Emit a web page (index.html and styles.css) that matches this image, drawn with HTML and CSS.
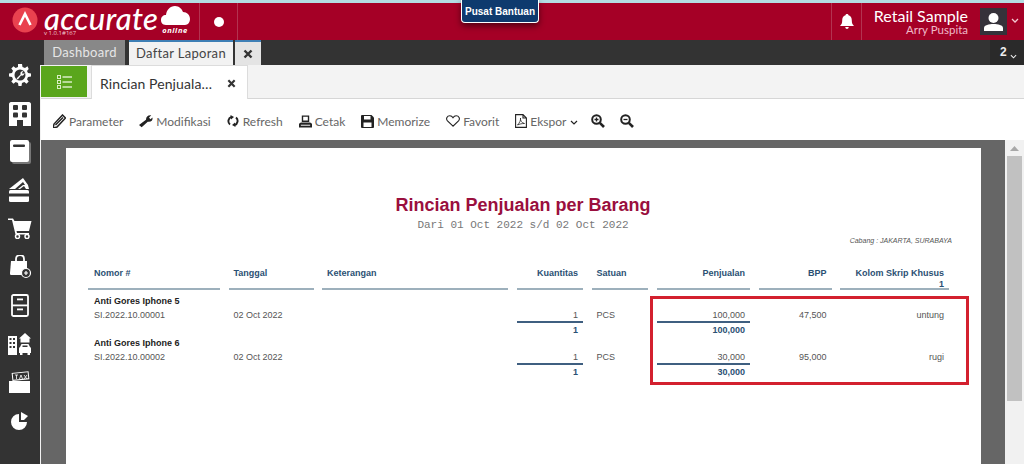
FILE: index.html
```html
<!DOCTYPE html>
<html lang="id">
<head>
<meta charset="utf-8">
<title>Rincian Penjualan per Barang</title>
<link rel="stylesheet" href="styles.css">
</head>
<body>
<div class="app">
  <div class="strip"></div>
  <header class="topbar">
    <div class="logo">
      <svg class="logo-mark" width="26" height="26" viewBox="0 0 26 26"><circle cx="13" cy="13" r="12.500" fill="#e9414f"/><path d="M7.500 18 L13 7 L18.500 18" fill="none" stroke="#fff" stroke-width="2.600"/></svg>
      <div class="logo-words">
        <span class="logo-name">accurate</span>
        <span class="logo-ver">v 1.0.1#167</span>
      </div>
      <div class="logo-cloud">
        <svg width="29" height="19" viewBox="0 0 29 19"><path d="M5 19 C1 19 0 16 0 14 C0 11 2 9 5 9 C5.500 4 9 0 14 0 C18 0 21 3 22 6 C26 6 29 9 29 13 C29 16 27 19 24 19 Z" fill="#fff"/></svg>
        <span class="logo-online">online</span>
      </div>
    </div>
    <div class="top-slot"><span class="dot"></span></div>
    <div class="top-right">
      <div class="bell-slot">
        <svg width="14" height="15" viewBox="0 0 14 15"><path d="M7 0 C8 0 8.500 .6 8.500 1.300 C11 2 11.800 4 11.800 6.500 C11.800 9 12.500 10.500 14 12 L0 12 C1.500 10.500 2.200 9 2.200 6.500 C2.200 4 3 2 5.500 1.300 C5.500 .6 6 0 7 0 Z M5.200 13 L8.800 13 C8.600 14.300 7.900 15 7 15 C6.100 15 5.400 14.300 5.200 13 Z" fill="#fff"/></svg>
      </div>
      <div class="who">
        <span class="who-co">Retail Sample</span>
        <span class="who-user">Arry Puspita</span>
      </div>
      <div class="avatar">
        <svg width="19" height="18" viewBox="0 0 19 18"><ellipse cx="9.500" cy="5" rx="5" ry="5" fill="#fff"/><path d="M0 18 L0 15 C0 12 5 11 9.500 11 C14 11 19 12 19 15 L19 18 Z" fill="#fff"/></svg>
      </div>
      <svg class="chev" width="8" height="5" viewBox="0 0 8 5"><path d="M1 1 L4 4 L7 1" fill="none" stroke="#f3c9d2" stroke-width="1.300"/></svg>
    </div>
  </header>
  <a class="help">Pusat Bantuan</a>
  <div class="main">
    <nav class="side">
      <div class="side-item"><svg width="22" height="22" viewBox="0 0 22 22"><path d="M9 0 H13 L13.500 3 L16 4 L18.500 2.300 L19.700 5 L18 7 L19 9 L22 9.500 V12.500 L19 13 L18 15.300 L19.700 17.500 L17.500 19.700 L15.300 18 L13 19 L12.500 22 H9.500 L9 19 L6.700 18 L4.500 19.700 L2.300 17.500 L4 15.300 L3 13 L0 12.500 V9.500 L3 9 L4 6.700 L2.300 4.500 L4.500 2.300 L6.700 4 L9 3 Z" fill="#fff"/><circle cx="11" cy="11" r="5.500" fill="#333"/><path d="M7.500 14.500 L11.500 10.500 C11 8.500 12 7 14.500 7 L13 9 L14 10 L15.500 8.500 C15.500 11 14 12 12 11.500 L8.800 15.500 Z" fill="#fff"/></svg></div>
      <div class="side-item"><svg width="22" height="24" viewBox="0 0 22 24"><path d="M2 0 H20 C21 0 22 1 22 2 V24 H14 V18 H8 V24 H0 V2 C0 1 1 0 2 0 Z" fill="#fff"/><g fill="#333"><rect x="4" y="3" width="5" height="5" rx="1"/><rect x="13" y="3" width="5" height="5" rx="1"/><rect x="4" y="10.500" width="5" height="5" rx="1"/><rect x="13" y="10.500" width="5" height="5" rx="1"/></g></svg></div>
      <div class="side-item"><svg width="21" height="24" viewBox="0 0 21 24"><rect x="2" y="2" width="19" height="22" rx="2" fill="#777"/><rect x="0" y="0" width="19" height="22" rx="2" fill="#fff"/><rect x="3" y="4.500" width="12" height="2.500" rx="1" fill="#333"/></svg></div>
      <div class="side-item"><svg width="22" height="24" viewBox="0 0 22 24"><path d="M0 11 L14 0 L19 7 L20 11 Z" fill="#fff"/><path d="M6 11 L14 4 L16 7 L14 7 L9 11 Z M11 11 L15 8 L17 11 Z" fill="#333"/><rect x="0" y="12" width="20" height="12" rx="1.500" fill="#fff"/><rect x="0" y="15.500" width="20" height="3" fill="#333"/></svg></div>
      <div class="side-item"><svg width="24" height="21" viewBox="0 0 24 21"><path d="M0 0.500 H5 L6.500 3 H23.500 L21 13 H8.500 L9 15 H21 V16.500 H7.500 L4 2 H0 Z" fill="#fff"/><circle cx="9.500" cy="18.500" r="2" fill="none" stroke="#fff" stroke-width="1.500"/><circle cx="19" cy="18.500" r="2" fill="none" stroke="#fff" stroke-width="1.500"/></svg></div>
      <div class="side-item"><svg width="21" height="24" viewBox="0 0 21 24"><path d="M6 6 V4 C6 1 8 0 10 0 C12 0 14 1 14 4 V6" fill="none" stroke="#fff" stroke-width="1.800"/><path d="M1 6 H17 V20 H1 C0 20 0 19 0 18 Z" fill="#fff"/><circle cx="16" cy="18" r="4.500" fill="#333" stroke="#fff" stroke-width="1.200"/><path d="M14 18 H18 M16 16 V20" stroke="#fff" stroke-width="1.200"/></svg></div>
      <div class="side-item"><svg width="18" height="23" viewBox="0 0 18 23"><rect x="1" y="1" width="16" height="21" rx="1.500" fill="#333" stroke="#fff" stroke-width="1.800"/><rect x="1" y="10.500" width="16" height="1.800" fill="#fff"/><rect x="6" y="4.500" width="6" height="1.800" fill="#fff"/><rect x="6" y="14.500" width="6" height="1.800" fill="#fff"/></svg></div>
      <div class="side-item"><svg width="24" height="24" viewBox="0 0 24 24"><rect x="0" y="4" width="9" height="19" fill="#fff"/><g fill="#333"><rect x="1.500" y="6" width="2" height="2"/><rect x="5" y="6" width="2" height="2"/><rect x="1.500" y="10" width="2" height="2"/><rect x="5" y="10" width="2" height="2"/><rect x="1.500" y="14" width="2" height="2"/><rect x="5" y="14" width="2" height="2"/></g><path d="M11 6.500 L17 1 L23 6.500 H21.500 V10.500 H12.500 V6.500 Z" fill="#fff"/><path d="M12 15 L13.500 12 H20.500 L22 15 C23 15.500 23 16 23 17 V21 H11 V17 C11 16 11 15.500 12 15 Z" fill="#fff"/><rect x="14.500" y="13.500" width="5" height="1.500" fill="#333"/><rect x="12" y="21" width="2.500" height="2" fill="#fff"/><rect x="19.500" y="21" width="2.500" height="2" fill="#fff"/></svg></div>
      <div class="side-item"><svg width="22" height="22" viewBox="0 0 22 22"><rect x="0" y="10" width="21" height="12" fill="#fff"/><rect x="3.500" y="1.500" width="16" height="7" transform="rotate(-6 12 5)" fill="#333" stroke="#fff" stroke-width="1"/><path d="M6 4 H9 M7.500 4 V8 M10.500 8 L12 4 L13.500 8 M15 4 L18 8 M18 4 L15 8" fill="none" stroke="#fff" stroke-width=".8"/></svg></div>
      <div class="side-item"><svg width="19" height="18" viewBox="0 0 19 18"><path d="M8 2 A8 8 0 1 0 16 10 H8 Z" fill="#fff"/><path d="M10 0 L17 4 L13 8 L10 8 Z" fill="#fff"/></svg></div>
    </nav>
    <div class="content">
      <div class="tabs">
        <span class="tab tab-muted">Dashboard</span>
        <span class="tab tab-active">Daftar Laporan</span>
        <span class="tab tab-close"><svg width="10" height="10" viewBox="0 0 10 10"><path d="M1.500 1.500 L8.500 8.500 M8.500 1.500 L1.500 8.500" stroke="#333" stroke-width="2.400"/></svg></span>
        <span class="tab-count">2<svg width="7" height="5" viewBox="0 0 8 5"><path d="M1 1 L4 4 L7 1" fill="none" stroke="#eee" stroke-width="1.200"/></svg></span>
      </div>
      <div class="pane">
        <div class="subtabs">
          <span class="list-btn"><svg width="15" height="14" viewBox="0 0 15 14"><g fill="none" stroke="#d8edc4" stroke-width="1"><rect x=".5" y=".5" width="3" height="3"/><rect x=".5" y="5.500" width="3" height="3"/><rect x=".5" y="10.500" width="3" height="3"/></g><path d="M5.500 2 H15 M5.500 7 H15 M5.500 12 H15" stroke="#d8edc4" stroke-width="1.400"/></svg></span>
          <span class="subtab"><span class="subtab-label">Rincian Penjuala…</span><svg width="9" height="9" viewBox="0 0 10 10"><path d="M1.500 1.500 L8.500 8.500 M8.500 1.500 L1.500 8.500" stroke="#333" stroke-width="2.400"/></svg></span>
        </div>
        <div class="toolbar">
          <span class="tool"><svg width="13" height="14" viewBox="0 0 13 14"><path d="M0 14 L1 10 L9.500 1 L12.500 4 L4 13 Z" fill="none" stroke="#222" stroke-width="1.500"/><path d="M2 10.500 L9.500 3 L10.500 4 L3 11.500 Z" fill="#222"/></svg>Parameter</span>
          <span class="tool"><svg width="14" height="14" viewBox="0 0 16 14"><path d="M0 11.500 L8 5.500 C8 2 10.500 0 14 0.500 L11.500 3 L13 5 L15.500 3 C16 6.500 13.500 8.500 10 7.800 L3 14 Z" fill="#222"/></svg>Modifikasi</span>
          <span class="tool"><svg class="wide-gap" width="12" height="12" viewBox="0 0 12 12"><path d="M4.500 1.800 A4.500 4.500 0 0 0 3 9.500 M7.500 10.200 A4.500 4.500 0 0 0 9 2.500" fill="none" stroke="#222" stroke-width="1.900"/><path d="M3.500 0 L7 2 L4 4.500 Z M8.500 12 L5 10 L8 7.500 Z" fill="#222"/></svg>Refresh</span>
          <span class="tool"><svg width="13" height="13" viewBox="0 0 14 13"><path d="M3 0 H11 V7 H3 Z M4.500 1.500 V5.500 H9.500 V1.500 Z M0 9 L2 7.500 H12 L14 9 V13 H0 Z" fill="#222" fill-rule="evenodd"/><rect x="2" y="10" width="10" height="1" fill="#fff"/></svg>Cetak</span>
          <span class="tool"><svg width="13" height="13" viewBox="0 0 13 13"><path d="M0 1 Q0 0 1 0 H10.500 L13 2.500 V12 Q13 13 12 13 H1 Q0 13 0 12 Z" fill="#222"/><rect x="3" y="1" width="6.500" height="3.500" fill="#fff"/><rect x="2.500" y="7.500" width="8" height="4.500" fill="#fff"/></svg>Memorize</span>
          <span class="tool"><svg width="14" height="12" viewBox="0 0 14 12"><path d="M7 11.200 L1.500 5.800 C-.5 3.500 1.200 .7 3.800 .7 C5.200 .7 6.300 1.500 7 2.700 C7.700 1.500 8.800 .7 10.200 .7 C12.800 .7 14.500 3.500 12.500 5.800 Z" fill="none" stroke="#222" stroke-width="1.100"/></svg>Favorit</span>
          <span class="tool"><svg width="12" height="14" viewBox="0 0 12 14"><path d="M.6 .6 H8 L11.400 4 V13.400 H.6 Z M8 .6 V4 H11.400" fill="none" stroke="#222" stroke-width="1.100"/><path d="M2.500 11 C4.500 9 6 6 5.500 4 C5 6 6.500 9 9.500 9.500 C7 9.500 4.500 10 2.500 11 Z" fill="none" stroke="#222" stroke-width=".8"/></svg>Ekspor<svg class="caret" width="8" height="5" viewBox="0 0 8 5"><path d="M1 1 L4 4 L7 1" fill="none" stroke="#222" stroke-width="1.200"/></svg></span>
          <span class="tool zoom-in"><svg width="14" height="14" viewBox="0 0 14 14"><circle cx="5.500" cy="5.500" r="4.300" fill="none" stroke="#222" stroke-width="2"/><path d="M8.800 8.800 L13 13" stroke="#222" stroke-width="2.600"/><path d="M3.500 5.500 H7.500 M5.500 3.500 V7.500" stroke="#222" stroke-width="1.300"/></svg></span>
          <span class="tool zoom-out"><svg width="14" height="14" viewBox="0 0 14 14"><circle cx="5.500" cy="5.500" r="4.300" fill="none" stroke="#222" stroke-width="2"/><path d="M8.800 8.800 L13 13" stroke="#222" stroke-width="2.600"/><path d="M3.500 5.500 H7.500" stroke="#222" stroke-width="1.300"/></svg></span>
        </div>
        <div class="viewer">
          <div class="viewer-gray">
            <article class="page">
              <h1 class="report-title">Rincian Penjualan per Barang</h1>
              <p class="report-range">Dari 01 Oct 2022 s/d 02 Oct 2022</p>
              <p class="report-branch">Cabang : JAKARTA, SURABAYA</p>
              <div class="grid grid-head">
                <div class="th">Nomor #</div>
                <div class="th">Tanggal</div>
                <div class="th">Keterangan</div>
                <div class="th r">Kuantitas</div>
                <div class="th">Satuan</div>
                <div class="th r">Penjualan</div>
                <div class="th r">BPP</div>
                <div class="th r">Kolom Skrip Khusus<br>1</div>
              </div>
              <div class="group">
                <div class="item">Anti Gores Iphone 5</div>
                <div class="grid grid-row">
                  <div class="td">SI.2022.10.00001</div>
                  <div class="td">02 Oct 2022</div>
                  <div class="td"></div>
                  <div class="td r sum">1</div>
                  <div class="td">PCS</div>
                  <div class="td r sum">100,000</div>
                  <div class="td r">47,500</div>
                  <div class="td r">untung</div>
                </div>
                <div class="grid grid-total">
                  <div></div><div></div><div></div>
                  <div class="tot r">1</div>
                  <div></div>
                  <div class="tot r">100,000</div>
                  <div></div><div></div>
                </div>
              </div>
              <div class="group">
                <div class="item">Anti Gores Iphone 6</div>
                <div class="grid grid-row">
                  <div class="td">SI.2022.10.00002</div>
                  <div class="td">02 Oct 2022</div>
                  <div class="td"></div>
                  <div class="td r sum">1</div>
                  <div class="td">PCS</div>
                  <div class="td r sum">30,000</div>
                  <div class="td r">95,000</div>
                  <div class="td r">rugi</div>
                </div>
                <div class="grid grid-total">
                  <div></div><div></div><div></div>
                  <div class="tot r">1</div>
                  <div></div>
                  <div class="tot r">30,000</div>
                  <div></div><div></div>
                </div>
              </div>
              <div class="highlight"></div>
            </article>
          </div>
          <div class="scrollbar">
            <svg width="9" height="5" viewBox="0 0 9 5"><path d="M0 5 L4.500 0 L9 5 Z" fill="#a8a8a8"/></svg>
            <div class="thumb"></div>
          </div>
        </div>
      </div>
    </div>
  </div>
</div>
</body>
</html>
```
FILE: styles.css
```css
* { box-sizing: border-box; }
html, body { margin: 0; height: 100%; overflow: hidden; }
body { font-family: "Lato", "Open Sans", sans-serif; background: #333; }
.app { position: relative; width: 1024px; height: 464px; display: flex; flex-direction: column; overflow: hidden; }
.strip { height: 3px; background: #b4dde3; flex: none; }

.topbar { height: 37px; flex: none; background: #a50026; display: flex; align-items: stretch; color: #fff; }
.logo { width: 199px; display: flex; align-items: flex-start; padding: 4px 0 0 12px; flex: none; }
.logo-mark { flex: none; }
.logo-words { display: flex; flex-direction: column; margin-left: 6px; width: 116px; }
.logo-name { font-family: "Lato", sans-serif; font-style: italic; font-weight: 500; font-size: 31px; line-height: 22px; letter-spacing: .3px; color: #fff; }
.logo-ver { font-family: "Open Sans", sans-serif; font-size: 6px; line-height: 8px; color: #f0c8d0; }
.logo-cloud { display: flex; flex-direction: column; align-items: center; width: 30px; margin-top: -1px; }
.logo-cloud svg { display: block; }
.logo-online { font-family: "Open Sans", sans-serif; font-style: italic; font-weight: 700; font-size: 7.500px; line-height: 7px; letter-spacing: .6px; color: #fff; margin-top: 2px; }
.top-slot { width: 39px; flex: none; border-left: 1px solid #b33350; border-right: 1px solid #b33350; display: flex; align-items: center; justify-content: center; }
.dot { width: 10px; height: 10px; border-radius: 50%; background: #fff; }
.top-right { margin-left: auto; display: flex; align-items: stretch; }
.bell-slot { width: 31px; border-left: 1px solid #b33350; border-right: 1px solid #b33350; display: flex; align-items: center; justify-content: center; }
.who { width: 106px; display: flex; flex-direction: column; align-items: flex-end; justify-content: flex-start; padding-top: 5px; }
.who-co { font-size: 16px; line-height: 16px; color: #fff; white-space: nowrap; }
.who-user { font-size: 11.500px; line-height: 11px; color: #efb9c6; white-space: nowrap; }
.avatar { width: 27px; height: 27px; margin: 5px 0 0 12px; background: #35323a; display: flex; align-items: center; justify-content: center; }
.chev { margin: 15px 5px 0 4px; }
.help { position: absolute; left: 461px; top: 0; width: 78px; height: 23px; background: #0e3a6e; border: 1px solid #fff; border-top: 0; border-radius: 0 0 4px 4px; box-shadow: 0 3px 6px rgba(0,0,0,.5); color: #fff; font-family: "Liberation Sans", sans-serif; font-weight: 700; font-size: 10px; line-height: 24px; text-align: center; white-space: nowrap; }

.main { flex: 1; display: flex; min-height: 0; }
.side { width: 40px; flex: none; background: #333; padding-top: 16px; display: flex; flex-direction: column; }
.side-item { height: 38.400px; flex: none; display: flex; align-items: center; justify-content: center; }
.content { flex: 1; display: flex; flex-direction: column; min-width: 0; }

.tabs { height: 25px; flex: none; background: #333; display: flex; align-items: stretch; padding-left: 4px; }
.tab { font-size: 13px; letter-spacing: .3px; line-height: 25px; white-space: nowrap; }
.tab-muted { width: 81px; background: #888; color: #e6e6e6; text-align: center; margin-right: 4px; }
.tab-active { width: 104px; background: #f2f2f2; color: #444; border-top: 2px solid #3e7fb5; line-height: 23px; text-align: center; margin-right: 2px; }
.tab-close { width: 26px; background: #e4e4e4; border-top: 2px solid #3e7fb5; display: flex; align-items: center; justify-content: center; }
.tab-count { margin-left: auto; width: 34px; background: #2a2a2a; color: #eee; font-family: "Liberation Sans", sans-serif; font-weight: 700; font-size: 12px; line-height: 25px; padding-left: 10px; display: flex; gap: 3px; }
.tab-count svg { margin-top: 14px; }

.pane { flex: 1; display: flex; flex-direction: column; min-height: 0; border-left: 1px solid #f2f2f2; background: #fff; }
.subtabs { height: 34px; flex: none; background: #f3f3f3; border-bottom: 1px solid #d6d6d6; display: flex; align-items: flex-end; }
.list-btn { width: 46px; height: 31px; margin-bottom: 1px; background: #5aa61c; display: flex; align-items: center; justify-content: center; }
.subtab { width: 157px; height: 34px; margin: 0 0 -1px 4px; background: #fff; border: 1px solid #dcdcdc; border-bottom: 0; display: flex; align-items: center; padding: 1px 0 0 8px; gap: 9px; color: #333; font-size: 14px; letter-spacing: .1px; }
.subtab-label { width: 118px; white-space: nowrap; }

.toolbar { height: 41px; flex: none; background: #fff; display: flex; align-items: center; padding: 3px 0 0 12px; gap: 16px; }
.tool { display: flex; align-items: center; gap: 3px; font-size: 12px; color: #666; white-space: nowrap; }
.wide-gap { margin-right: 1px; }
.caret { margin-left: 1px; margin-top: 2px; }
.zoom-in { margin-left: -3px; }
.zoom-out { margin-left: -1px; }

.viewer { flex: 1; display: flex; min-height: 0; }
.viewer-gray { width: 964px; flex: none; background: #666; padding: 8px 24px 0 25px; overflow: hidden; }
.scrollbar { flex: 1; background: #f1f1f1; display: flex; flex-direction: column; align-items: center; padding-top: 6px; }
.thumb { width: 15px; height: 245px; margin-top: 5px; background: #c1c1c1; }

.page { position: relative; width: 915px; height: 400px; background: #fff; padding: 45px 33px 0 22px; font-family: "Liberation Sans", Arial, sans-serif; }
.report-title { margin: 0; padding-left: 10px; font-size: 18px; line-height: 24px; font-weight: 700; color: #9a0f3e; text-align: center; }
.report-range { margin: 2px 0 0; padding-left: 10px; font-family: "Liberation Mono", monospace; font-size: 11px; line-height: 13px; color: #777; text-align: center; }
.report-branch { margin: 4px -4px 0 0; font-size: 7px; line-height: 9px; font-style: italic; color: #555; text-align: right; }

.grid { display: grid; grid-template-columns: 132px 85px 186px 66.500px 56.500px 93.500px 73px 109px; column-gap: 8.500px; }
.grid-head { margin-top: 20px; height: 25px; align-items: start; }
.th { height: 25px; padding: 3px 5px 0; border-bottom: 2px solid #9db0bc; font-size: 9px; line-height: 10.500px; font-weight: 700; color: #2b5073; white-space: nowrap; }
.th.r, .td.r, .tot.r { text-align: right; }
.th:first-child, .td:first-child { padding-left: 6px; }
.grid-head + .group { margin-top: 5px; }
.item { height: 14px; padding-left: 6px; font-size: 9px; line-height: 12px; font-weight: 700; color: #222; }
.grid-row { height: 14px; }
.td { height: 14px; padding: 0 5px; font-size: 9px; line-height: 13px; color: #555; }
.td.sum { border-bottom: 2px solid #3f5f80; }
.grid-total { height: 14px; }
.tot { padding: 1px 5px 0; font-size: 9px; line-height: 13px; font-weight: 700; color: #2b5073; }

.highlight { position: absolute; left: 584px; top: 148px; width: 319px; height: 89px; border: 3px solid #d3202f; }
```
